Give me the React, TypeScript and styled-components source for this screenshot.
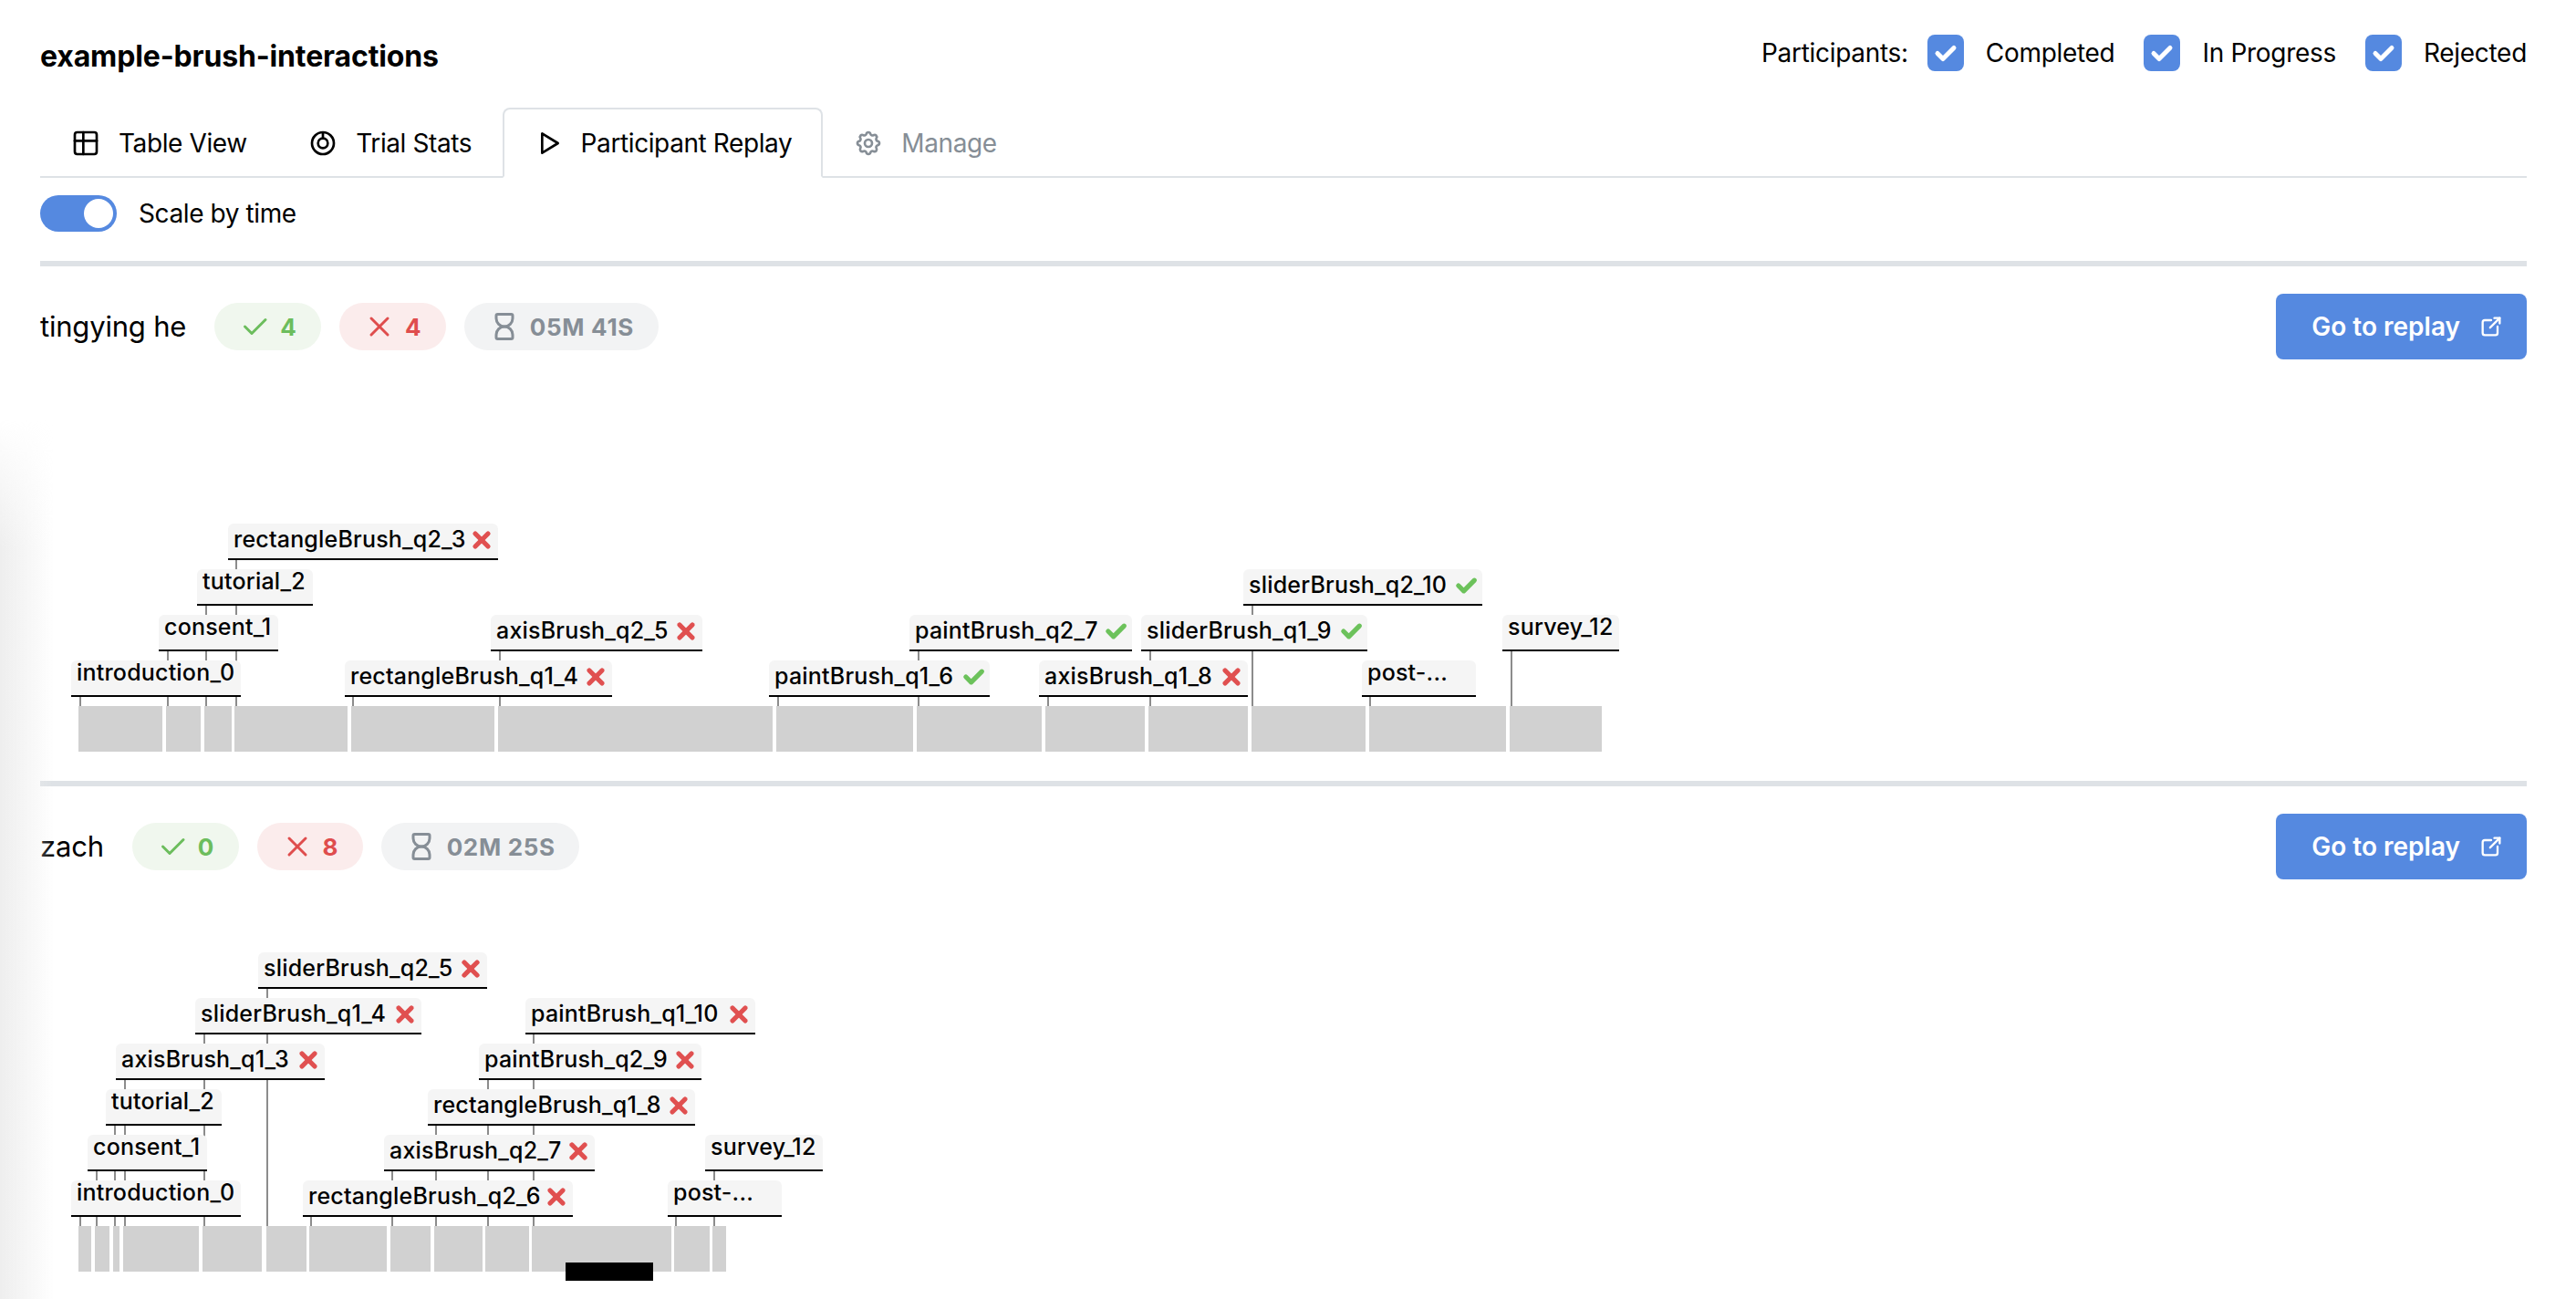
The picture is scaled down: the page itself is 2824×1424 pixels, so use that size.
import React from 'react';
import styled, { createGlobalStyle } from 'styled-components';
import {
  TbCheck,
  TbX,
  TbTable,
  TbPlayerPlay,
  TbSettings,
  TbHourglassEmpty,
  TbExternalLink,
} from 'react-icons/tb';

const PAGE_LEFT = 44;
const ROW_STEP = 50;
const BAR_TOP = 380;

type Status = 'ok' | 'bad' | 'none';
type Node = { name: string; x: number; w: number; row: number; tick: number; status: Status };

const GlobalStyle = createGlobalStyle`
  html, body {
    margin: 0;
    height: 1424px;
    overflow: hidden;
    background: #fff;
    font-family: Inter, 'Liberation Sans', sans-serif;
    color: #000;
  }
`;

const Page = styled.div`
  position: relative;
  height: 1424px;
  box-sizing: border-box;
  padding: 38px 54px 0 44px;
  overflow: hidden;
`;

const EdgeShadow = styled.div`
  position: absolute;
  left: 0;
  top: 460px;
  bottom: 0;
  width: 60px;
  background: linear-gradient(to right, #eeeeee, rgba(255, 255, 255, 0));
  mask-image: linear-gradient(to bottom, transparent, #000 140px);
  pointer-events: none;
`;

const Header = styled.header`
  display: flex;
  align-items: center;
  justify-content: space-between;
  height: 40px;
`;

const Title = styled.h1`
  margin: 8px 0 0;
  font-size: 32px;
  font-weight: 700;
  line-height: 40px;
  letter-spacing: -0.14px;
`;

const Filters = styled.div`
  display: flex;
  align-items: center;
  font-size: 28px;
  letter-spacing: -0.3px;
`;

const FilterLabel = styled.span`
  margin-right: 21px;
`;

const Filter = styled.label`
  display: flex;
  align-items: center;
  gap: 24px;
  margin-right: 32px;
  &:last-child {
    margin-right: 0;
  }
`;

const CheckBox = styled.span`
  display: flex;
  align-items: center;
  justify-content: center;
  width: 40px;
  height: 40px;
  border-radius: 8px;
  background: #5589e0;
`;

const TabList = styled.nav`
  display: flex;
  height: 77px;
  box-sizing: border-box;
  margin-top: 40px;
  border-bottom: 2px solid #dee2e6;
`;

const Tab = styled.div<{ $active?: boolean; $disabled?: boolean }>`
  display: flex;
  align-items: center;
  gap: 20px;
  height: 77px;
  box-sizing: border-box;
  padding: 0 32px;
  font-size: 28px;
  letter-spacing: -0.4px;
  border: 2px solid ${(p) => (p.$active ? '#dee2e6' : 'transparent')};
  border-bottom-color: ${(p) => (p.$active ? '#fff' : 'transparent')};
  border-radius: 8px 8px 0 0;
  color: ${(p) => (p.$disabled ? '#868e96' : '#000')};
  &:nth-child(-n + 2) {
    padding-right: 31.5px;
  }
`;

const SwitchRow = styled.div`
  display: flex;
  align-items: center;
  gap: 24px;
  margin-top: 19px;
  height: 40px;
  font-size: 28px;
  letter-spacing: -0.4px;
`;

const Track = styled.span`
  display: flex;
  justify-content: flex-end;
  align-items: center;
  box-sizing: border-box;
  width: 84px;
  height: 40px;
  padding-right: 4px;
  border-radius: 20px;
  background: #5589e0;
`;

const Thumb = styled.span`
  width: 32px;
  height: 32px;
  border-radius: 50%;
  background: #fff;
`;

const Section = styled.section<{ $first?: boolean }>`
  margin-top: ${(p) => (p.$first ? '32px' : '0')};
  border-top: 6px solid #dee2e6;
  padding-top: 30px;
`;

const SectionHead = styled.div`
  display: flex;
  align-items: center;
  height: 72px;
`;

const Person = styled.span`
  font-size: 31px;
  letter-spacing: -0.2px;
  margin: 0 31px 2px 0;
`;

const Pills = styled.div`
  display: flex;
  gap: 20px;
`;

const Pill = styled.span<{ $tone: 'green' | 'red' | 'gray' }>`
  display: flex;
  align-items: center;
  gap: 10px;
  height: 52px;
  padding: 0 26.5px 0 26px;
  border-radius: 26px;
  font-size: 26px;
  font-weight: 700;
  letter-spacing: 0.7px;
  background: ${(p) => ({ green: '#f0f7ee', red: '#fbecec', gray: '#f2f3f4' }[p.$tone])};
  color: ${(p) => ({ green: '#6cbd5d', red: '#df4d4d', gray: '#868e96' }[p.$tone])};
`;

const ReplayButton = styled.button`
  display: flex;
  align-items: center;
  gap: 20px;
  height: 72px;
  margin-left: auto;
  padding: 0 25px 0 39px;
  border: 0;
  border-radius: 8px;
  background: #5589e0;
  color: #fff;
  font-family: inherit;
  font-size: 28px;
  font-weight: 600;
`;

const Chart = styled.div`
  position: relative;
  height: 462px;
`;

const Bar = styled.div<{ $x: number; $end: number }>`
  position: absolute;
  top: ${BAR_TOP}px;
  left: ${(p) => p.$x - PAGE_LEFT}px;
  width: ${(p) => p.$end - p.$x}px;
  height: 50px;
  background: #d1d1d1;
`;

const Tick = styled.div<{ $x: number; $row: number }>`
  position: absolute;
  left: ${(p) => p.$x - PAGE_LEFT - 1}px;
  top: ${(p) => BAR_TOP - ROW_STEP * p.$row - 10}px;
  width: 2px;
  height: ${(p) => ROW_STEP * p.$row + 10}px;
  background: #8c8c8c;
`;

const NodeLabel = styled.div<{ $x: number; $w: number; $row: number; $icon: boolean }>`
  position: absolute;
  left: ${(p) => p.$x - PAGE_LEFT}px;
  top: ${(p) => BAR_TOP - ROW_STEP * (p.$row + 1)}px;
  width: ${(p) => p.$w}px;
  height: 40px;
  box-sizing: border-box;
  display: flex;
  align-items: ${(p) => (p.$icon ? 'center' : 'flex-start')};
  padding: 1px 4px 5px 6px;
  gap: 3px;
  background: #f5f5f5;
  border-bottom: 2px solid #000;
  border-radius: 6px 6px 0 0;
  font-size: 25px;
  font-weight: 500;
  letter-spacing: 0.2px;
  line-height: 24px;
  white-space: nowrap;
`;

const StatusIcon = styled.span<{ $ok: boolean }>`
  display: flex;
  align-self: flex-start;
  margin-top: 3px;
  margin-left: auto;
  color: ${(p) => (p.$ok ? '#6cc25b' : '#e05050')};
`;

const Redaction = styled.div`
  position: absolute;
  left: ${620 - PAGE_LEFT}px;
  top: 420px;
  width: 96px;
  height: 20px;
  background: #000;
`;

const BoxCheck = () => (
  <svg width="30" height="30" viewBox="0 0 30 30" fill="none">
    <polyline
      points="6,15.5 12,21.5 24,9.5"
      stroke="#fff"
      strokeWidth="5"
      strokeLinecap="round"
      strokeLinejoin="round"
    />
  </svg>
);

const DonutIcon = () => (
  <svg width="32" height="32" viewBox="0 0 24 24" fill="none" stroke="currentColor" strokeWidth="2">
    <circle cx="12" cy="12" r="9" />
    <circle cx="12" cy="12" r="4" />
    <path d="M12 3v5" />
  </svg>
);

const firstBars: [number, number][] = [
  [86, 178], [182, 220], [224, 254], [257, 381], [385, 542], [546, 847], [851, 1001],
  [1005, 1142], [1146, 1255], [1259, 1368], [1372, 1497], [1501, 1651], [1655, 1756],
];

const firstNodes: Node[] = [
  { name: 'introduction_0', x: 78, w: 186, row: 0, tick: 88, status: 'none' },
  { name: 'consent_1', x: 174, w: 131, row: 1, tick: 184, status: 'none' },
  { name: 'tutorial_2', x: 216, w: 127, row: 2, tick: 226, status: 'none' },
  { name: 'rectangleBrush_q2_3', x: 250, w: 296, row: 3, tick: 259, status: 'bad' },
  { name: 'rectangleBrush_q1_4', x: 378, w: 293, row: 0, tick: 387, status: 'bad' },
  { name: 'axisBrush_q2_5', x: 538, w: 232, row: 1, tick: 548, status: 'bad' },
  { name: 'paintBrush_q1_6', x: 843, w: 242, row: 0, tick: 853, status: 'ok' },
  { name: 'paintBrush_q2_7', x: 997, w: 244, row: 1, tick: 1007, status: 'ok' },
  { name: 'axisBrush_q1_8', x: 1139, w: 229, row: 0, tick: 1149, status: 'bad' },
  { name: 'sliderBrush_q1_9', x: 1251, w: 248, row: 1, tick: 1261, status: 'ok' },
  { name: 'sliderBrush_q2_10', x: 1363, w: 262, row: 2, tick: 1373, status: 'ok' },
  { name: 'post-...', x: 1493, w: 125, row: 0, tick: 1502, status: 'none' },
  { name: 'survey_12', x: 1647, w: 128, row: 1, tick: 1657, status: 'none' },
];

const secondBars: [number, number][] = [
  [86, 100], [104, 120], [124, 131], [135, 218], [222, 287], [292, 336], [339, 424],
  [428, 472], [476, 529], [532, 580], [583, 736], [739, 778], [781, 796],
];

const secondNodes: Node[] = [
  { name: 'introduction_0', x: 78, w: 186, row: 0, tick: 88, status: 'none' },
  { name: 'consent_1', x: 96, w: 131, row: 1, tick: 106, status: 'none' },
  { name: 'tutorial_2', x: 116, w: 127, row: 2, tick: 126, status: 'none' },
  { name: 'axisBrush_q1_3', x: 127, w: 229, row: 3, tick: 137, status: 'bad' },
  { name: 'sliderBrush_q1_4', x: 214, w: 248, row: 4, tick: 224, status: 'bad' },
  { name: 'sliderBrush_q2_5', x: 283, w: 251, row: 5, tick: 293, status: 'bad' },
  { name: 'rectangleBrush_q2_6', x: 332, w: 296, row: 0, tick: 341, status: 'bad' },
  { name: 'axisBrush_q2_7', x: 421, w: 231, row: 1, tick: 430, status: 'bad' },
  { name: 'rectangleBrush_q1_8', x: 469, w: 293, row: 2, tick: 478, status: 'bad' },
  { name: 'paintBrush_q2_9', x: 525, w: 244, row: 3, tick: 535, status: 'bad' },
  { name: 'paintBrush_q1_10', x: 576, w: 252, row: 4, tick: 585, status: 'bad' },
  { name: 'post-...', x: 732, w: 125, row: 0, tick: 741, status: 'none' },
  { name: 'survey_12', x: 773, w: 129, row: 1, tick: 783, status: 'none' },
];

const Timeline: React.FC<{ bars: [number, number][]; nodes: Node[]; redacted?: boolean }> = ({
  bars,
  nodes,
  redacted,
}) => (
  <Chart>
    {bars.map(([x, end]) => (
      <Bar key={x} $x={x} $end={end} />
    ))}
    {nodes.map((n) => (
      <Tick key={n.name} $x={n.tick} $row={n.row} />
    ))}
    {nodes.map((n) => (
      <NodeLabel key={n.name} $x={n.x} $w={n.w} $row={n.row} $icon={n.status !== 'none'}>
        {n.name}
        {n.status !== 'none' && (
          <StatusIcon $ok={n.status === 'ok'}>
            {n.status === 'ok' ? (
              <TbCheck size={28} strokeWidth={4.5} />
            ) : (
              <TbX size={28} strokeWidth={4.5} />
            )}
          </StatusIcon>
        )}
      </NodeLabel>
    ))}
    {redacted && <Redaction />}
  </Chart>
);

const Participant: React.FC<{
  name: string;
  ok: number;
  bad: number;
  time: string;
  first?: boolean;
  children: React.ReactNode;
}> = ({ name, ok, bad, time, first, children }) => (
  <Section $first={first}>
    <SectionHead>
      <Person>{name}</Person>
      <Pills>
        <Pill $tone="green">
          <TbCheck size={36} />
          {ok}
        </Pill>
        <Pill $tone="red">
          <TbX size={36} />
          {bad}
        </Pill>
        <Pill $tone="gray">
          <TbHourglassEmpty size={36} />
          {time}
        </Pill>
      </Pills>
      <ReplayButton>
        Go to replay
        <TbExternalLink size={28} />
      </ReplayButton>
    </SectionHead>
    {children}
  </Section>
);

export default function App() {
  return (
    <Page>
      <GlobalStyle />
      <Header>
        <Title>example-brush-interactions</Title>
        <Filters>
          <FilterLabel>Participants:</FilterLabel>
          {['Completed', 'In Progress', 'Rejected'].map((f) => (
            <Filter key={f}>
              <CheckBox>
                <BoxCheck />
              </CheckBox>
              {f}
            </Filter>
          ))}
        </Filters>
      </Header>
      <TabList>
        <Tab>
          <TbTable size={32} />
          Table View
        </Tab>
        <Tab>
          <DonutIcon />
          Trial Stats
        </Tab>
        <Tab $active>
          <TbPlayerPlay size={32} />
          Participant Replay
        </Tab>
        <Tab $disabled>
          <TbSettings size={32} />
          Manage
        </Tab>
      </TabList>
      <SwitchRow>
        <Track>
          <Thumb />
        </Track>
        Scale by time
      </SwitchRow>
      <Participant name="tingying he" ok={4} bad={4} time="05M 41S" first>
        <Timeline bars={firstBars} nodes={firstNodes} />
      </Participant>
      <Participant name="zach" ok={0} bad={8} time="02M 25S">
        <Timeline bars={secondBars} nodes={secondNodes} redacted />
      </Participant>
      <EdgeShadow />
    </Page>
  );
}
